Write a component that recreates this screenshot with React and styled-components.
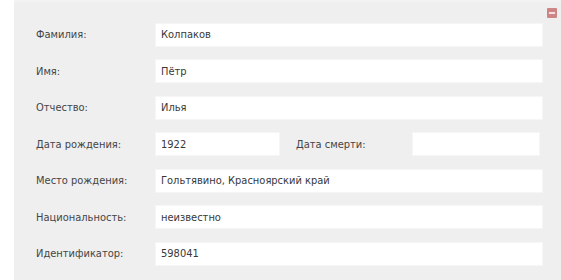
import React from 'react';
import styled, { createGlobalStyle } from 'styled-components';

const GlobalStyle = createGlobalStyle`
    body {
        margin: 0;
        background: #ffffff;
        font-family: "DejaVu Sans Condensed", "DejaVu Sans", sans-serif;
    }
`;

const Page = styled.div`
    padding-left: 14px;
    width: 561px;
    height: 280px;
    box-sizing: border-box;
`;

const Panel = styled.div`
    position: relative;
    background: #efefef;
    border-top: 2px solid #f3f3f3;
    height: 100%;
    box-sizing: border-box;
    padding: 20.5px 18px 0 22px;
    display: flex;
    flex-direction: column;
    gap: 12.5px;
`;

const CloseButton = styled.button`
    position: absolute;
    top: 6px;
    right: 4px;
    width: 10px;
    height: 10px;
    padding: 0;
    border: none;
    border-radius: 1px;
    background: #cd8585;
    display: flex;
    align-items: center;
    justify-content: center;
    cursor: pointer;

    &::before {
        content: '';
        width: 6px;
        height: 2px;
        background: #f4dede;
    }
`;

const Row = styled.div`
    display: flex;
    align-items: center;
    height: 24px;
`;

const Label = styled.label`
    width: ${p => p.$width || 119}px;
    flex-shrink: 0;
    font-size: 11px;
    color: #454545;
`;

const Field = styled.div`
    width: ${p => p.$width}px;
    height: 24px;
    box-sizing: border-box;
    background: #ffffff;
    border: 1px solid #f6f6f6;
    padding: 0 5px;
    display: flex;
    align-items: center;
    font-size: 11px;
    color: #383838;
    margin-right: ${p => p.$after || 0}px;
`;

const fields = [
    ['Фамилия:', 'Колпаков'],
    ['Имя:', 'Пётр'],
    ['Отчество:', 'Илья'],
    null,
    ['Место рождения:', 'Гольтявино, Красноярский край'],
    ['Национальность:', 'неизвестно'],
    ['Идентификатор:', '598041'],
];

export default function App() {
    return (
        <Page>
            <GlobalStyle />
            <Panel>
                <CloseButton aria-label="Свернуть" />
                {fields.map((f, i) =>
                    f ? (
                        <Row key={i}>
                            <Label>{f[0]}</Label>
                            <Field $width={388}>{f[1]}</Field>
                        </Row>
                    ) : (
                        <Row key={i}>
                            <Label>Дата рождения:</Label>
                            <Field $width={125} $after={16}>1922</Field>
                            <Label $width={116}>Дата смерти:</Label>
                            <Field $width={128}></Field>
                        </Row>
                    )
                )}
            </Panel>
        </Page>
    );
}
